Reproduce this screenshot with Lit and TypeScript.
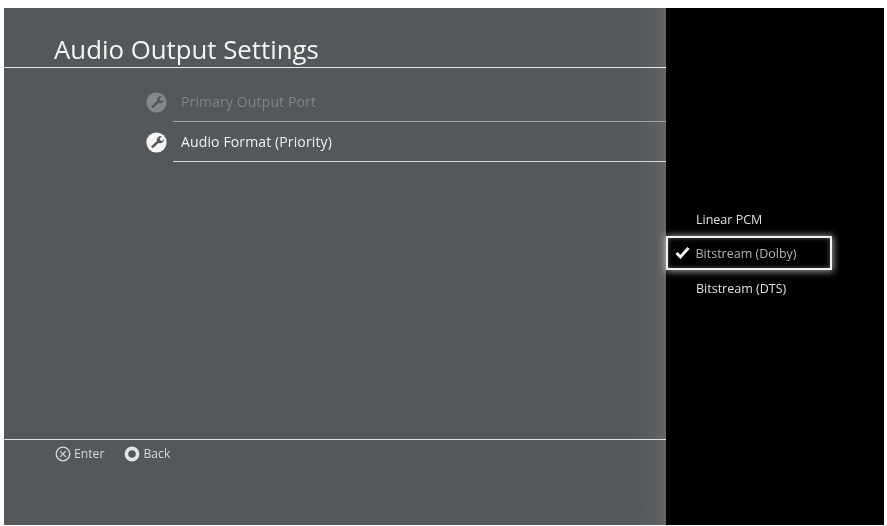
import { LitElement, html, css, svg } from "lit";
import { customElement } from "lit/decorators.js";

const PANEL = "#55585a";

const wrench = (bg: string, fg: string) => html`<svg class="wrench" viewBox="0 0 20 20">
  <circle cx="10" cy="10" r="9.6" fill="${fg}"></circle>
  ${svg`<path d="M4.8 13.8 L10.4 8.6 A3.8 3.8 0 0 1 15.2 4 L13 6.2 L13.6 8 L15.4 8.5 L17.2 6.6 A3.9 3.9 0 0 1 11.9 10.4 L6.5 15.5 Z" fill="${bg}"></path>`}
</svg>`;

@customElement("app-root")
export class AppRoot extends LitElement {
  static styles = css`
    :host {
      display: block;
      width: 887px;
      height: 526px;
      box-sizing: border-box;
      padding: 8px 3px 1px 4px;
      background: #ffffff;
      font-family: "Open Sans", "Noto Sans", sans-serif;
      color: #fff;
      overflow: hidden;
    }
    .frame {
      display: flex;
      height: 100%;
      filter: blur(0.45px);
    }
    .main {
      width: 662px;
      display: flex;
      flex-direction: column;
      background: linear-gradient(90deg, #55585a 0, #55585a 630px, #5c5f61 652px, #666665 662px);
    }
    .header {
      height: 60px;
      box-sizing: border-box;
      border-bottom: 1px solid #e6e6e6;
      padding: 24px 0 0 50px;
      font-size: 25.8px;
      line-height: 34px;
      color: #f4f4f4;
    }
    .rows {
      flex: 1;
      padding: 14px 0 0 142px;
    }
    .row {
      display: flex;
      align-items: center;
      height: 40px;
      gap: 6px;
    }
    .wrench {
      width: 21px;
      height: 21px;
      flex: none;
    }
    .row-body {
      flex: 1;
      height: 40px;
      box-sizing: border-box;
      border-bottom: 1.5px solid #d8d8d8;
      padding-left: 8px;
      font-size: 14px;
      line-height: 40px;
      letter-spacing: 0.13px;
      color: #eeeeee;
    }
    .row.off .row-body {
      color: #7f8386;
      border-bottom-color: #a0a2a3;
    }
    .footer {
      height: 86px;
      box-sizing: border-box;
      border-top: 1.5px solid #e2e2e2;
      padding: 5px 0 0 51px;
      display: flex;
      align-items: flex-start;
      font-size: 12.2px;
      line-height: 17px;
      color: #d4d6d6;
    }
    .hint {
      display: flex;
      align-items: center;
      gap: 3px;
    }
    .hint + .hint {
      margin-left: 20px;
    }
    .btn {
      width: 16px;
      height: 16px;
      flex: none;
    }
    .side {
      flex: 1;
      background: #000;
      padding-top: 193px;
      font-size: 12.5px;
      color: #d6d6d6;
    }
    .opt {
      width: 166px;
      height: 34.5px;
      box-sizing: border-box;
      padding: 2px 0 0 30px;
      display: flex;
      align-items: center;
      position: relative;
      color: #e0e0e0;
    }
    .opt.sel {
      border: 2.5px solid #f2f2f2;
      padding: 2px 0 0 27.5px;
      box-shadow: 0 0 7px 1.5px rgba(255, 255, 255, 0.6), inset 0 0 5px rgba(255, 255, 255, 0.35);
      color: #b4b4b4;
    }
    .check {
      position: absolute;
      left: 6.5px;
      top: 8.5px;
      width: 15px;
      height: 13px;
    }
  `;

  render() {
    return html`<div class="frame">
      <section class="main">
        <div class="header">Audio Output Settings</div>
        <div class="rows">
          <div class="row off">
            ${wrench(PANEL, "#85888a")}
            <div class="row-body">Primary Output Port</div>
          </div>
          <div class="row">
            ${wrench(PANEL, "#f6f6f6")}
            <div class="row-body">Audio Format (Priority)</div>
          </div>
        </div>
        <div class="footer">
          <div class="hint">
            <svg class="btn" viewBox="0 0 16 16">
              <circle cx="8" cy="8" r="6.8" fill="none" stroke="#d8d8d8" stroke-width="1.3"></circle>
              <path d="M5.2 5.2 L10.8 10.8 M10.8 5.2 L5.2 10.8" stroke="#d8d8d8" stroke-width="1.2" fill="none"></path>
            </svg>
            <span>Enter</span>
          </div>
          <div class="hint">
            <svg class="btn" viewBox="0 0 16 16">
              <circle cx="8" cy="8" r="5.6" fill="none" stroke="#e4e4e4" stroke-width="3.6"></circle>
            </svg>
            <span>Back</span>
          </div>
        </div>
      </section>
      <aside class="side">
        <div class="opt">Linear PCM</div>
        <div class="opt sel">
          <svg class="check" viewBox="0 0 15 13">
            <path d="M1.5 7 L5.4 11 L13.5 2" fill="none" stroke="#fff" stroke-width="2.8"></path>
          </svg>
          Bitstream (Dolby)
        </div>
        <div class="opt">Bitstream (DTS)</div>
      </aside>
    </div>`;
  }
}
